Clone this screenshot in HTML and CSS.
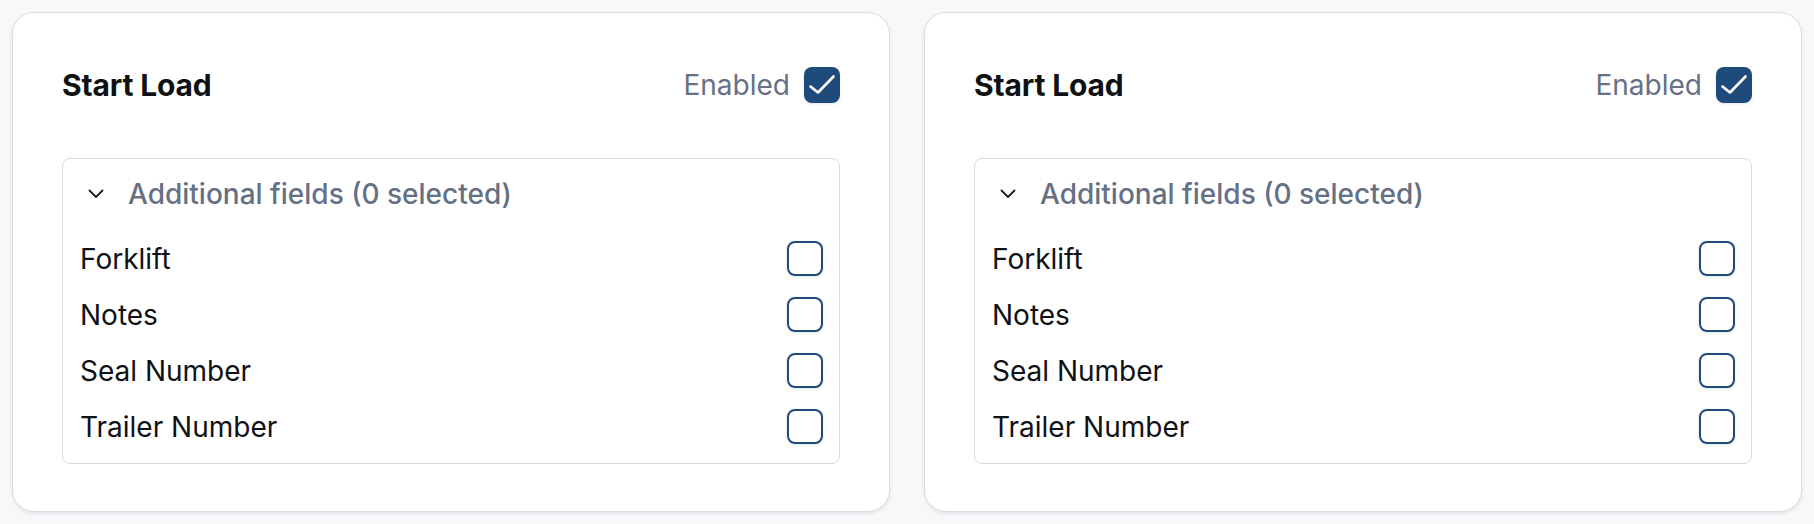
FILE: index.html
```html
<html>

<head>
    <meta charset="utf-8">
    <link rel="stylesheet" href="styles.css">
</head>

<body>
    <main class="steps">
        <section class="step-card">
            <div class="step-header">
                <h2>Start Load</h2>
                <label class="toggle">
                    <span>Enabled</span>
                    <span class="box checked">
                        <svg viewBox="0 0 36 36"><path d="M6.5 19.5 L14 25.5 L29.5 9.5" /></svg>
                    </span>
                </label>
            </div>
            <div class="fields">
                <div class="fields-head">
                    <svg class="chevron" viewBox="0 0 16 10"><path d="M1.5 1.5 L8 8 L14.5 1.5" /></svg>
                    <span>Additional fields (0 selected)</span>
                </div>
                <ul class="field-list">
                    <li><span>Forklift</span><span class="box"></span></li>
                    <li><span>Notes</span><span class="box"></span></li>
                    <li><span>Seal Number</span><span class="box"></span></li>
                    <li><span>Trailer Number</span><span class="box"></span></li>
                </ul>
            </div>
        </section>

        <section class="step-card">
            <div class="step-header">
                <h2>Start Load</h2>
                <label class="toggle">
                    <span>Enabled</span>
                    <span class="box checked">
                        <svg viewBox="0 0 36 36"><path d="M6.5 19.5 L14 25.5 L29.5 9.5" /></svg>
                    </span>
                </label>
            </div>
            <div class="fields">
                <div class="fields-head">
                    <svg class="chevron" viewBox="0 0 16 10"><path d="M1.5 1.5 L8 8 L14.5 1.5" /></svg>
                    <span>Additional fields (0 selected)</span>
                </div>
                <ul class="field-list">
                    <li><span>Forklift</span><span class="box"></span></li>
                    <li><span>Notes</span><span class="box"></span></li>
                    <li><span>Seal Number</span><span class="box"></span></li>
                    <li><span>Trailer Number</span><span class="box"></span></li>
                </ul>
            </div>
        </section>
    </main>
</body>

</html>
```

FILE: styles.css
```css
html {
    background-color: #f7f8fa;
    font-family: Inter, 'Noto Sans', sans-serif;
    color: #0f1115;
}

body {
    margin: 0;
}

main.steps {
    display: grid;
    grid-template-columns: 1fr 1fr;
    gap: 34px;
    padding: 12px;
}

section.step-card {
    background: #fff;
    border: 1px solid #d9dde2;
    border-radius: 22px;
    box-shadow: 0 2px 4px rgba(15, 23, 42, 0.08);
    padding: 54px 49px 47px 49px;
}

div.step-header {
    display: flex;
    justify-content: space-between;
    align-items: center;
    height: 36px;
    margin-bottom: 55px;
}

div.step-header h2 {
    margin: 0;
    font-size: 30px;
    font-weight: 700;
    letter-spacing: -0.005em;
}

label.toggle {
    display: flex;
    align-items: center;
    gap: 14px;
    font-size: 28px;
    color: #667085;
}

.box {
    width: 32px;
    height: 31px;
    border: 2px solid #1f4a7c;
    border-radius: 8px;
    background: #fff;
    box-shadow: 0 1px 3px rgba(15, 23, 42, 0.12);
    flex-shrink: 0;
}

.box.checked {
    width: 36px;
    height: 36px;
    border: none;
    background: #1f4a7c;
    display: flex;
}

.box.checked svg {
    width: 36px;
    height: 36px;
    fill: none;
    stroke: #fff;
    stroke-width: 2.6;
    stroke-linecap: round;
    stroke-linejoin: round;
}

div.fields {
    border: 1px solid #d6dae0;
    border-radius: 8px;
    padding: 15px 16px 19px 17px;
}

div.fields-head {
    display: flex;
    align-items: center;
    height: 40px;
    gap: 24px;
    padding-left: 8px;
    font-size: 28px;
    font-weight: 500;
    color: #667085;
    margin-bottom: 27px;
}

svg.chevron {
    width: 16px;
    height: 10px;
    fill: none;
    stroke: #1a1d23;
    stroke-width: 1.8;
    stroke-linecap: round;
    stroke-linejoin: round;
}

ul.field-list {
    list-style: none;
    margin: 0;
    padding: 0;
    display: flex;
    flex-direction: column;
    gap: 21px;
}

ul.field-list li {
    display: flex;
    justify-content: space-between;
    align-items: center;
    height: 35px;
    font-size: 28px;
}
```
